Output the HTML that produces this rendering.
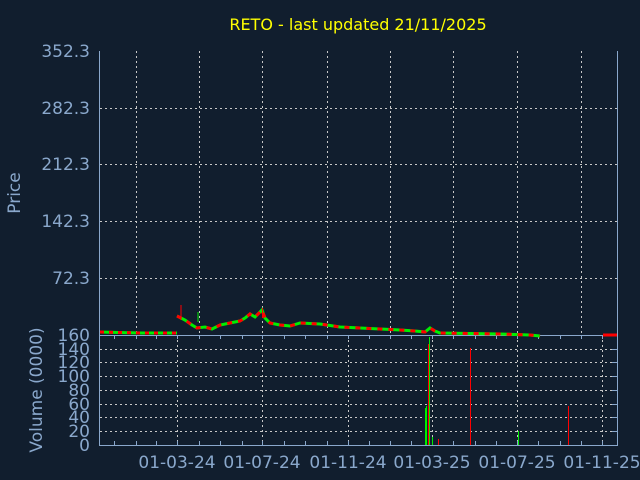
<!DOCTYPE html>
<html><head><style>
html,body{margin:0;padding:0;background:#111e2e;}
svg{display:block}
text{font-family:"DejaVu Sans","Liberation Sans",sans-serif;}
</style></head><body>
<svg width="640" height="480" viewBox="0 0 640 480" xmlns="http://www.w3.org/2000/svg">
<rect width="640" height="480" fill="#111e2e"/>
<text x="358" y="30" fill="#ffff00" font-size="16" text-anchor="middle">RETO - last updated 21/11/2025</text>
<g stroke="#c8c8c8" stroke-width="1" stroke-dasharray="2,3" fill="none">
<path d="M100 108.5H617M100 164.5H617M100 221.5H617M100 278.5H617"/>
<path d="M136.5 51V335M199.5 51V335M262.5 51V335M327.5 51V335M390.5 51V335M453.5 51V335M517.5 51V335M581.5 51V335"/>
<path d="M100 349.5H617M100 362.5H617M100 376.5H617M100 390.5H617M100 404.5H617M100 417.5H617M100 431.5H617"/>
<path d="M177.5 335V445M262.5 335V445M348.5 335V445M432.5 335V445M517.5 335V445M602.5 335V445"/>
</g>
<g stroke="#8aa8cc" stroke-width="1" fill="none">
<path d="M99.5 51V445.5H617.5V51M99.5 335.5H617.5"/>
<path d="M114.5 335v4M136.5 335v4M156.5 335v4M177.5 335v4M199.5 335v4M220.5 335v4M242.5 335v4M262.5 335v4M284.5 335v4M305.5 335v4M327.5 335v4M348.5 335v4M369.5 335v4M390.5 335v4M411.5 335v4M432.5 335v4M453.5 335v4M475.5 335v4M496.5 335v4M517.5 335v4M538.5 335v4M560.5 335v4M581.5 335v4M602.5 335v4"/>
<path d="M114.5 445v-4M136.5 445v-4M156.5 445v-4M177.5 445v-4M199.5 445v-4M220.5 445v-4M242.5 445v-4M262.5 445v-4M284.5 445v-4M305.5 445v-4M327.5 445v-4M348.5 445v-4M369.5 445v-4M390.5 445v-4M411.5 445v-4M432.5 445v-4M453.5 445v-4M475.5 445v-4M496.5 445v-4M517.5 445v-4M538.5 445v-4M560.5 445v-4M581.5 445v-4M602.5 445v-4"/>
<path d="M617 349.5h-5M617 362.5h-5M617 376.5h-5M617 390.5h-5M617 404.5h-5M617 417.5h-5M617 431.5h-5"/>
</g>
<g fill="none" stroke-width="3">
<polyline stroke="#00ee00" points="100,332 140,333 177,333"/>
<polyline stroke="#00ee00" points="177,316 185,320 192,325 197,328 205,327 212,329 220,325 230,323 240,321 245,318 250,314 255,317 262,310 265,318 270,323 280,325 290,326 300,323 320,324 340,327 360,328 380,329 400,330 415,331 425,332 430,328 435,331 440,333 500,334 530,335 540,336"/>
<polyline stroke="#ff0000" stroke-dasharray="4,5" points="100,332 140,333 177,333"/>
<polyline stroke="#ff0000" stroke-dasharray="5,6" points="177,316 185,320 192,325 197,328 205,327 212,329 220,325 230,323 240,321 245,318 250,314 255,317 262,310 265,318 270,323 280,325 290,326 300,323 320,324 340,327 360,328 380,329 400,330 415,331 425,332 430,328 435,331 440,333 500,334 530,335 540,336"/>
<polyline stroke="#ff0000" points="603,335 617,335"/>
</g>
<g stroke-width="1">
<path stroke="#ff0000" d="M181 305V320M262.5 308V318"/>
<path stroke="#00ee00" d="M425.5 408V445M426.5 406V445M518.5 431V445M198 312V322M429.5 337V445M432.5 437V445"/>
<path stroke="#ff0000" d="M428.5 344V445M470.5 348V445M568.5 406V445M438.5 439V445"/>
</g>
<g fill="#8aa8cc" font-size="17" text-anchor="end">
<text x="90" y="57">352.3</text>
<text x="90" y="114">282.3</text>
<text x="90" y="170">212.3</text>
<text x="90" y="227">142.3</text>
<text x="90" y="284">72.3</text>
<text x="90" y="341">160</text>
<text x="90" y="355">140</text>
<text x="90" y="368">120</text>
<text x="90" y="382">100</text>
<text x="90" y="396">80</text>
<text x="90" y="410">60</text>
<text x="90" y="423">40</text>
<text x="90" y="437">20</text>
<text x="90" y="451">0</text>
</g>
<g fill="#8aa8cc" font-size="17" text-anchor="middle">
<text x="177" y="468">01-03-24</text>
<text x="262" y="468">01-07-24</text>
<text x="348" y="468">01-11-24</text>
<text x="432" y="468">01-03-25</text>
<text x="517" y="468">01-07-25</text>
<text x="602" y="468">01-11-25</text>
</g>
<text transform="translate(20,193) rotate(-90)" fill="#8aa8cc" font-size="17" text-anchor="middle">Price</text>
<text transform="translate(42,390) rotate(-90)" fill="#8aa8cc" font-size="17" text-anchor="middle">Volume (0000)</text>
</svg>
</body></html>
